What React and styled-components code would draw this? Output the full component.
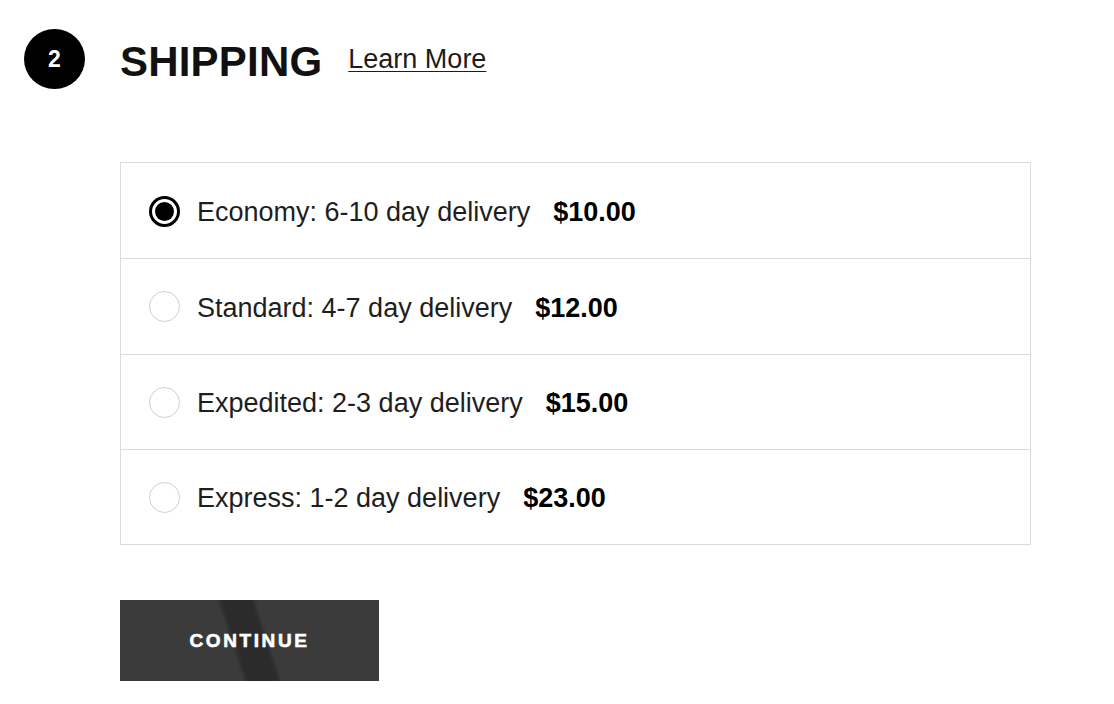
import React, { useState } from 'react';
import styled, { createGlobalStyle } from 'styled-components';

const GlobalStyle = createGlobalStyle`
  body {
    margin: 0;
    background: #fff;
    font-family: 'Liberation Sans', Arial, sans-serif;
    color: #111;
  }
`;

const Page = styled.div`
  width: 1114px;
  min-height: 704px;
  padding-top: 29px;
  box-sizing: border-box;
`;

const Header = styled.div`
  display: flex;
  align-items: center;
  padding-left: 24px;
  height: 60px;
`;

const StepBadge = styled.div`
  width: 61px;
  height: 60px;
  border-radius: 50%;
  background: #000;
  color: #fff;
  display: flex;
  align-items: center;
  justify-content: center;
  font-size: 23px;
  font-weight: 700;
`;

const Title = styled.h2`
  margin: 0 0 0 35px;
  font-size: 42px;
  font-weight: 700;
  letter-spacing: 0.2px;
  line-height: 1;
  padding-top: 5px;
`;

const LearnMore = styled.a`
  margin-left: 26px;
  font-size: 27px;
  color: #1c1c1c;
  text-decoration: underline;
  text-underline-offset: 3px;
  text-decoration-thickness: 1px;
  cursor: pointer;
`;

const Body = styled.div`
  padding-left: 120px;
  margin-top: 73px;
`;

const OptionList = styled.div`
  width: 911px;
  border: 1px solid #dcdcdc;
  box-sizing: border-box;
`;

const OptionRow = styled.label`
  display: flex;
  align-items: center;
  height: 95.25px;
  box-sizing: border-box;
  padding: 4px 0 0 28px;
  border-top: ${({ $first }) => ($first ? 'none' : '1px solid #dcdcdc')};
  cursor: pointer;
  font-size: 27px;
  color: #1e1e1e;
`;

const Radio = styled.span`
  width: 31px;
  height: 31px;
  border-radius: 50%;
  box-sizing: border-box;
  border: ${({ $checked }) => ($checked ? '3px solid #000' : '1px solid #cfcfcf')};
  display: flex;
  align-items: center;
  justify-content: center;
  margin-right: 17px;
  margin-top: -3px;
  flex-shrink: 0;

  &::after {
    content: '';
    display: ${({ $checked }) => ($checked ? 'block' : 'none')};
    width: 19px;
    height: 19px;
    border-radius: 50%;
    background: #000;
  }
`;

const Label = styled.span`
  margin-right: 23px;
`;

const Price = styled.span`
  font-weight: 700;
  color: #000;
`;

const ContinueButton = styled.button`
  margin-top: 55px;
  width: 259px;
  height: 81px;
  border: none;
  padding: 0;
  color: #fff;
  font-family: 'Liberation Sans', Arial, sans-serif;
  font-size: 19px;
  font-weight: 700;
  letter-spacing: 2.6px;
  background: linear-gradient(
    72deg,
    #3b3b3b 0%,
    #3b3b3b 43%,
    #2b2b2b 45%,
    #2b2b2b 55%,
    #3b3b3b 57%,
    #3b3b3b 100%
  );
  cursor: pointer;
  -webkit-text-stroke: 0.6px #fff;
`;

const options = [
  { id: 'economy', label: 'Economy: 6-10 day delivery', price: '$10.00' },
  { id: 'standard', label: 'Standard: 4-7 day delivery', price: '$12.00' },
  { id: 'expedited', label: 'Expedited: 2-3 day delivery', price: '$15.00' },
  { id: 'express', label: 'Express: 1-2 day delivery', price: '$23.00' },
];

const App = () => {
  const [selected, setSelected] = useState('economy');

  return (
    <Page>
      <GlobalStyle />
      <Header>
        <StepBadge>2</StepBadge>
        <Title>SHIPPING</Title>
        <LearnMore>Learn More</LearnMore>
      </Header>
      <Body>
        <OptionList>
          {options.map((opt, i) => (
            <OptionRow key={opt.id} $first={i === 0} onClick={() => setSelected(opt.id)}>
              <Radio $checked={selected === opt.id} />
              <Label>{opt.label}</Label>
              <Price>{opt.price}</Price>
            </OptionRow>
          ))}
        </OptionList>
        <ContinueButton>CONTINUE</ContinueButton>
      </Body>
    </Page>
  );
};

export default App;
